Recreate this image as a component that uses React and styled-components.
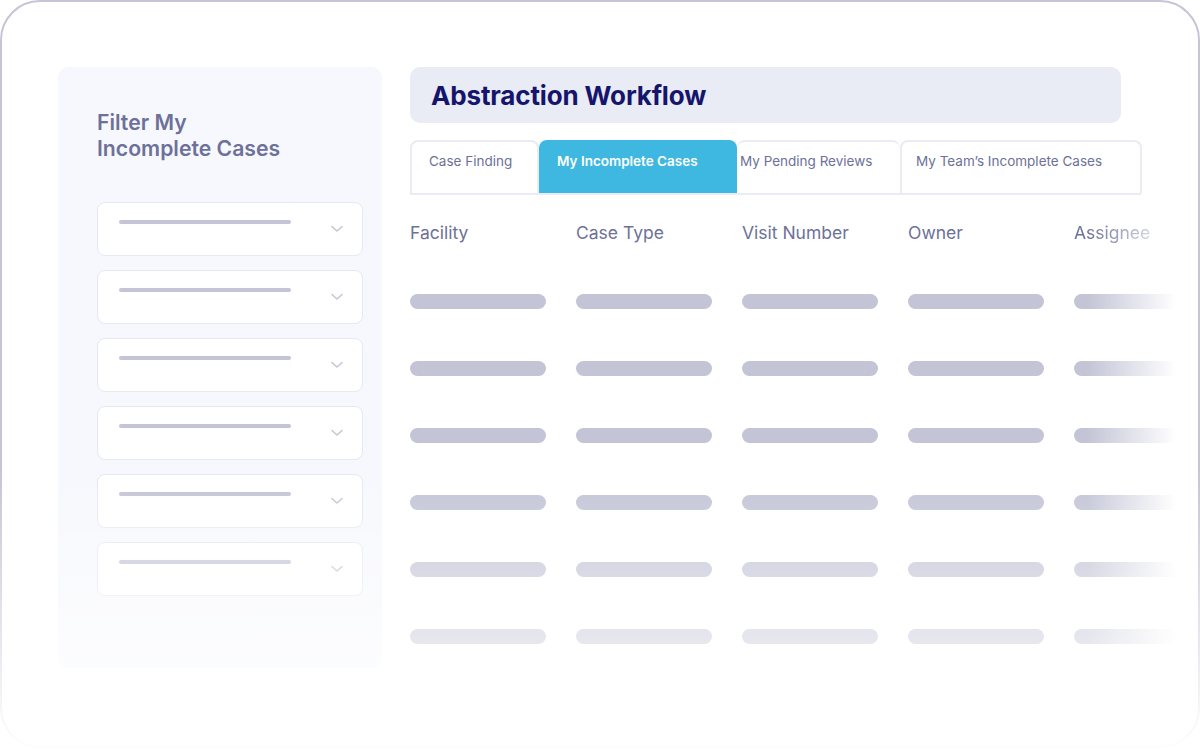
import React from 'react'
import styled, { createGlobalStyle } from 'styled-components'

const GlobalStyle = createGlobalStyle`
    * { box-sizing: border-box; }
    body {
        margin: 0;
        background: #fff;
        font-family: Inter, 'Noto Sans', sans-serif;
    }
`;

const Stage = styled.div`
    position: relative;
    width: 1200px;
    height: 748px;
`;

const Frame = styled.div`
    width: 100%;
    height: 100%;
    border: 2px solid #c4c6d6;
    border-radius: 40px;
    overflow: hidden;
    padding: 65px 0 0 56px;
    display: flex;
    align-items: flex-start;
    gap: 28px;
    background: #fff;
`;

const Fade = styled.div`
    position: absolute;
    inset: 0;
    pointer-events: none;
    background: linear-gradient(to bottom, rgba(255,255,255,0) 63%, rgba(255,255,255,0.97) 100%);
`;

const Sidebar = styled.aside`
    flex: 0 0 324px;
    height: 601px;
    background: #f7f8fd;
    border-radius: 10px;
    padding: 42px 19px 0 39px;

    & h3 {
        margin: 0 0 41px;
        font-size: 21.2px;
        line-height: 26px;
        font-weight: 600;
        color: #6d7199;
    }
`;

const SelectList = styled.div`
    display: flex;
    flex-direction: column;
    gap: 14px;
`;

const Select = styled.div`
    position: relative;
    height: 54px;
    background: #fff;
    border: 1px solid #e6e8f3;
    border-radius: 8px;
    padding: 17px 0 0 21px;

    & .line {
        width: 172px;
        height: 4px;
        border-radius: 2px;
        background: #c3c5d6;
    }
    & svg {
        position: absolute;
        right: 19px;
        top: 22px;
    }
`;

const Main = styled.main`
    flex: 1;
    min-width: 0;
    display: flex;
    flex-direction: column;
`;

const TitleBar = styled.div`
    width: 711px;
    height: 56px;
    background: #e9ebf5;
    border-radius: 10px;
    display: flex;
    align-items: center;
    padding-left: 21px;

    & h1 {
        margin: 0;
        font-size: 26px;
        font-weight: 700;
        color: #15156b;
        letter-spacing: -0.15px;
    }
`;

const Tabs = styled.div`
    display: flex;
    margin-top: 17px;
    width: 731px;
    height: 55px;
    border-bottom: 2px solid #e9ebf5;
`;

const Tab = styled.div`
    flex: 0 0 ${p => p.$w}px;
    padding: ${p => p.$active ? 13 : 11}px 0 0 ${p => p.$pl}px;
    font-size: 13.5px;
    line-height: 16px;
    font-weight: ${p => p.$active ? 600 : 400};
    color: ${p => p.$active ? '#fff' : '#6d7199'};
    background: ${p => p.$active ? '#3eb8e0' : '#fff'};
    border: ${p => p.$active ? 'none' : '2px solid #e9ebf5'};
    border-bottom: none;
    border-left-width: ${p => p.$noLeft ? 0 : 2}px;
    border-right-width: ${p => p.$noRight ? 0 : 2}px;
    border-radius: 8px 8px 0 0;
    white-space: nowrap;
`;

const Grid = styled.div`
    display: grid;
    grid-template-columns: repeat(5, 136px);
    column-gap: 30px;
    margin-top: 28px;
`;

const Column = styled.div`
    display: flex;
    flex-direction: column;
    ${p => p.$fade && `
        -webkit-mask-image: linear-gradient(to right, #000 10%, transparent 75%);
        mask-image: linear-gradient(to right, #000 10%, transparent 75%);
    `}

    & .head {
        font-size: 17.5px;
        line-height: 20px;
        color: #6d7199;
        margin-bottom: 51px;
        white-space: nowrap;
    }
`;

const Bar = styled.div`
    height: 15px;
    border-radius: 8px;
    background: #c3c5d6;
    margin-bottom: 52px;
`;

const Chevron = () => (
    <svg width="12" height="8" viewBox="0 0 12 8" fill="none">
        <path d="M1 1.5 L6 6 L11 1.5" stroke="#c3c5d6" strokeWidth="1.5" strokeLinecap="round" strokeLinejoin="round" />
    </svg>
)

const tabs = [
    { label: 'Case Finding', w: 129, pl: 17 },
    { label: 'My Incomplete Cases', w: 198, pl: 18, active: true },
    { label: 'My Pending Reviews', w: 163, pl: 3, noLeft: true, noRight: true },
    { label: 'My Team’s Incomplete Cases', w: 242, pl: 14 },
]

const columns = ['Facility', 'Case Type', 'Visit Number', 'Owner', 'Assignee']

const App = () => {
    return (
        <>
            <GlobalStyle />
            <Stage>
                <Frame>
                    <Sidebar>
                        <h3>Filter My<br />Incomplete Cases</h3>
                        <SelectList>
                            {[0, 1, 2, 3, 4, 5].map(i => (
                                <Select key={i}>
                                    <div className='line' />
                                    <Chevron />
                                </Select>
                            ))}
                        </SelectList>
                    </Sidebar>
                    <Main>
                        <TitleBar>
                            <h1>Abstraction Workflow</h1>
                        </TitleBar>
                        <Tabs>
                            {tabs.map(t => (
                                <Tab key={t.label} $w={t.w} $pl={t.pl} $active={t.active} $noLeft={t.noLeft} $noRight={t.noRight}>
                                    {t.label}
                                </Tab>
                            ))}
                        </Tabs>
                        <Grid>
                            {columns.map((c, i) => (
                                <Column key={c} $fade={i === 4}>
                                    <div className='head'>{c}</div>
                                    {[0, 1, 2, 3, 4, 5].map(r => <Bar key={r} />)}
                                </Column>
                            ))}
                        </Grid>
                    </Main>
                </Frame>
                <Fade />
            </Stage>
        </>
    )
}

export default App
